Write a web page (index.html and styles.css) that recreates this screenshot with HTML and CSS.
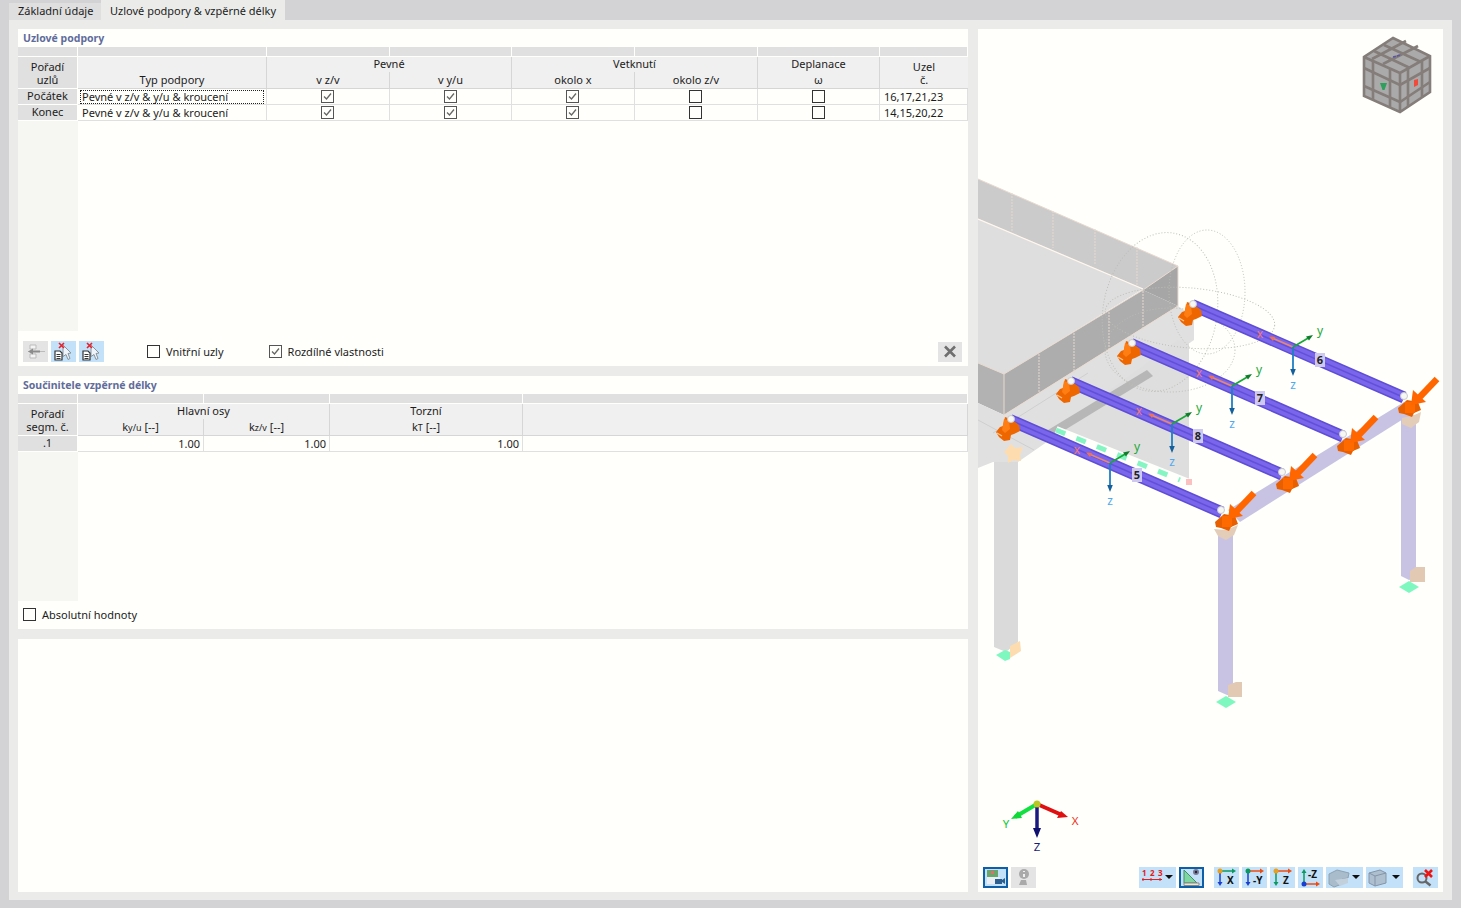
FILE: index.html
```html
<!DOCTYPE html>
<html lang="cs">
<head>
<meta charset="utf-8">
<title>Uzlové podpory &amp; vzpěrné délky</title>
<link rel="stylesheet" href="styles.css">
</head>
<body>
<nav class="tabs">
  <div class="tab">Základní údaje</div>
  <div class="tab tab-active">Uzlové podpory &amp; vzpěrné délky</div>
</nav>
<main class="main">
  <div class="left">
    <section class="panel">
      <h2 class="panel-title">Uzlové podpory</h2>
      <div class="grid g1">
        <div class="strip"></div><div class="strip"></div><div class="strip"></div><div class="strip"></div><div class="strip"></div><div class="strip"></div><div class="strip"></div><div class="strip"></div>
        <div class="hd hd-row r2">Pořadí<br>uzlů</div>
        <div class="hd r2 bottom">Typ podpory</div>
        <div class="hd c2">Pevné</div>
        <div class="hd c2">Vetknutí</div>
        <div class="hd">Deplanace</div>
        <div class="hd r2 mid">Uzel<br>č.</div>
        <div class="hd sub">v z/v</div><div class="hd sub">v y/u</div>
        <div class="hd sub">okolo x</div><div class="hd sub">okolo z/v</div>
        <div class="hd sub">ω</div>

        <div class="rh">Počátek</div>
        <div class="cell"><span class="focus">Pevné v z/v &amp; y/u &amp; kroucení</span></div>
        <div class="cell ctr"><span class="cb on"><svg viewBox="0 0 11 11"><path d="M2 5.500l2.500 2.500L9 2.500"/></svg></span></div>
        <div class="cell ctr"><span class="cb on"><svg viewBox="0 0 11 11"><path d="M2 5.500l2.500 2.500L9 2.500"/></svg></span></div>
        <div class="cell ctr"><span class="cb on"><svg viewBox="0 0 11 11"><path d="M2 5.500l2.500 2.500L9 2.500"/></svg></span></div>
        <div class="cell ctr"><span class="cb"></span></div>
        <div class="cell ctr"><span class="cb"></span></div>
        <div class="cell">16,17,21,23</div>

        <div class="rh">Konec</div>
        <div class="cell"><span class="plain">Pevné v z/v &amp; y/u &amp; kroucení</span></div>
        <div class="cell ctr"><span class="cb on"><svg viewBox="0 0 11 11"><path d="M2 5.500l2.500 2.500L9 2.500"/></svg></span></div>
        <div class="cell ctr"><span class="cb on"><svg viewBox="0 0 11 11"><path d="M2 5.500l2.500 2.500L9 2.500"/></svg></span></div>
        <div class="cell ctr"><span class="cb on"><svg viewBox="0 0 11 11"><path d="M2 5.500l2.500 2.500L9 2.500"/></svg></span></div>
        <div class="cell ctr"><span class="cb"></span></div>
        <div class="cell ctr"><span class="cb"></span></div>
        <div class="cell">14,15,20,22</div>
      </div>
      <div class="filler"><div class="filler-col"></div></div>
      <div class="foot foot1">
        <button class="tb tb-off"><svg viewBox="0 0 25 21"><path d="M7 4h6v4H7zM7 13h6v4H7z" fill="#f4f4f4" stroke="#bbb"/><path d="M5 10.500h17" stroke="#bbb"/><path d="M5 10.500l5-3v2h7v2h-7v2z" fill="#8c8c8c"/></svg></button>
        <button class="tb tb-blue"><svg viewBox="0 0 25 21"><path d="M12 4l8 8-3 .5 2 5-2 1-2-5-3 2z" fill="#eef4fa" stroke="#8b9299"/><path d="M4 10h5l2 2v7H4z" fill="#fff" stroke="#333" stroke-width="1.200"/><path d="M5.500 13.500h4M5.500 15.500h4M5.500 17.500h4" stroke="#333"/><path d="M8 2l5 5M13 2L8 7" stroke="#e8202a" stroke-width="1.600"/></svg></button>
        <button class="tb tb-blue"><svg viewBox="0 0 25 21"><path d="M12 4l8 8-3 .5 2 5-2 1-2-5-3 2z" fill="#eef4fa" stroke="#8b9299"/><path d="M4 10h5l2 2v7H4z" fill="#fff" stroke="#333" stroke-width="1.200"/><path d="M5.500 13.500h4M5.500 15.500h4M5.500 17.500h4" stroke="#333"/><path d="M8 2l5 5M13 2L8 7" stroke="#e8202a" stroke-width="1.600"/></svg></button>
        <label class="check chk-a"><span class="cb"></span>Vnitřní uzly</label>
        <label class="check chk-b"><span class="cb on"><svg viewBox="0 0 11 11"><path d="M2 5.500l2.500 2.500L9 2.500"/></svg></span>Rozdílné vlastnosti</label>
        <button class="tb tb-off tb-close"><svg viewBox="0 0 24 20"><path d="M7 4.500l10 10M17 4.500l-10 10" stroke="#6f6f6f" stroke-width="2.600"/></svg></button>
      </div>
    </section>

    <section class="panel">
      <h2 class="panel-title">Součinitele vzpěrné délky</h2>
      <div class="grid g2">
        <div class="strip"></div><div class="strip"></div><div class="strip"></div><div class="strip"></div><div class="strip"></div>
        <div class="hd hd-row r2">Pořadí<br>segm. č.</div>
        <div class="hd c2">Hlavní osy</div>
        <div class="hd">Torzní</div>
        <div class="hd r2"></div>
        <div class="hd sub">k<small>y/u</small> [--]</div>
        <div class="hd sub">k<small>z/v</small> [--]</div>
        <div class="hd sub">k<small>T</small> [--]</div>

        <div class="rh">.1</div>
        <div class="cell num">1.00</div>
        <div class="cell num">1.00</div>
        <div class="cell num">1.00</div>
        <div class="cell"></div>
      </div>
      <div class="filler"><div class="filler-col"></div></div>
      <div class="foot foot2">
        <label class="check"><span class="cb"></span>Absolutní hodnoty</label>
      </div>
    </section>

    <section class="panel"></section>
  </div>

  <section class="view">
    <svg class="scene" viewBox="978 29 465 863" xmlns="http://www.w3.org/2000/svg">
      <defs>
        <g id="sup-start">
          <path d="M-15 13l4-5 3-1 2-9 6 2 8 6 1 6-6 3-3 1-1 5-6 1-5-4z" fill="#ee6600"/>
          <path d="M-7 0l5 2 1 8-5 4-3-3z" fill="#ff7e14"/>
          <path d="M-14 14l5 3" stroke="#ffc690" stroke-width="1.200"/>
        </g>
        <g id="sup-end">
          <path d="M-6 12l9-8 11 2 3 8-7 3-2 4-8-3-5-1z" fill="#e85f00"/>
          <path d="M1 6h10v11H1z" fill="#ff6a00"/>
          <path d="M33-17L12 5" stroke="#ff6600" stroke-width="6.500"/>
          <path d="M9-6L22 6 7 9z" fill="#ff6600"/>
        </g>
        <g id="beam-end"><circle r="3.500" fill="#f6f6f2" stroke="#c9c9cf"/></g>
        <g id="axes">
          <path d="M0 0L-22-9.500" stroke="#e9866f" stroke-width="1.600"/>
          <path d="M-24-10.500l6 .5-2 4z" fill="#f07058"/>
          <path d="M0 0L17-10" stroke="#19a838" stroke-width="1.800"/>
          <path d="M20-12l-7 1.500 3 4z" fill="#0f7d2a"/>
          <path d="M0 0V24" stroke="#1f7fc4" stroke-width="1.800"/>
          <path d="M0 29l-2.800-7h5.600z" fill="#155f9a"/>
          <text class="ax" x="24" y="-12" fill="#22a838">y</text>
          <text class="ax" x="0" y="42" text-anchor="middle" fill="#4ea9f0">z</text>
          <text class="ax" x="-33" y="-9" text-anchor="middle" fill="#f47878">x</text>
        </g>
        <g id="beam">
          <path d="M0 0L212 92.500" stroke="#5f4dd4" stroke-width="12"/>
          <path d="M0 0L212 92.500" stroke="#7966ec" stroke-width="9"/>
          <path d="M0 0L212 92.500" stroke="#6350d8" stroke-width="1.500"/>
        </g>
      </defs>

      <!-- slab and wall -->
      <path d="M978 179L1178 266 1143 290 978 219z" fill="#cbcbcb"/>
      <path d="M978 219L1143 289 1004 374 978 363z" fill="#dedede"/>
      <path d="M1143 290L1178 266V306z" fill="#a6a6a6"/>
      <path d="M1004 374L1143 290 1178 306 1004 415z" fill="#adadad"/>
      <path d="M978 363L1004 374V415L978 403z" fill="#b2b2b2"/>
      <path d="M978 403L1004 415 1178 306 1194 317V340L1018 462 993 462 978 468z" fill="#e0e0e0"/>
      <path d="M1056 430L1178 340 1189 342V483z" fill="#dedede"/>
      <path d="M1048 430L1147 370 1153 376 1055 436z" fill="#b7b7b7"/>
      <path d="M978 179L1178 266 1143 290M978 219L1143 289M1143 290L1004 374 978 363M1004 374V415M1178 266V306L1004 415" fill="none" stroke="#e9d9cf"/>
      <path d="M978 219L1143 289" stroke="#fff8f0" stroke-width="1.200"/>
      <path d="M1012 193v38M1053 211v37M1095 229v36M1137 247v39M1143 291v39M1109 312v40M1074 333v40M1039 354v40" stroke="#e8d8cf" stroke-dasharray="2 1"/>
      <path d="M978 420l26 14 30 16M993 433l95-60" stroke="#cfcfcf" fill="none"/>

      <!-- columns -->
      <path d="M994 462h24V642l-12 10-12-5z" fill="#dadada"/>
      <path d="M1010 646l10-5 1 10-11 7z" fill="#fddcb0"/>
      <path d="M996 655l9-5 5 2v7l-5 2z" fill="#7ff8c0"/>
      <path d="M1218 530h15V696l-6-1-9-4z" fill="#c9c3e3"/>
      <path d="M1228 685l8-3h6v15h-14z" fill="#e2c9b4"/>
      <path d="M1216 702l10-6 10 6-10 6z" fill="#7ff8c0"/>
      <path d="M1401 415h15V578l-7 2-8-4z" fill="#c9c3e3"/>
      <path d="M1410 571l6-4h9v15h-15z" fill="#e2c9b4"/>
      <path d="M1399 587l10-6 10 6-10 6z" fill="#7ff8c0"/>
      <path d="M1228 510L1404 402 1408 416 1240 522z" fill="#c9c3e3"/>
      <path d="M1004 452l7-8 4 4 8-1-3 8 1 6-8-1-5 3 0-7z" fill="#fddcb0"/>
      <path d="M1402 418l10-2 9-4-2 10-8 6-9-4zM1214 529l12 1 12-5-4 10-8 5-8-4z" fill="#e3cdb8"/>

      <!-- dotted rings -->
      <g fill="none" stroke="#bdbdb8" stroke-dasharray="1 2">
        <ellipse cx="1160" cy="312" rx="57" ry="80" transform="rotate(10 1160 312)"/>
        <ellipse cx="1207" cy="292" rx="38" ry="62"/>
        <ellipse cx="1190" cy="318" rx="85" ry="30" transform="rotate(5 1190 318)"/>
        <ellipse cx="1170" cy="350" rx="65" ry="42"/>
      </g>

      <!-- mint dashes -->
      <path d="M1056 430L1189 483" stroke="#fffffb" stroke-width="8"/>
      <path d="M1056 430L1180 480" stroke="#86f5c4" stroke-width="5" stroke-dasharray="10 12"/>
      <rect x="1186" y="479" width="6" height="6" fill="#fcc0c0"/>

      <!-- purple members -->
      <use href="#beam" x="1192" y="305"/><use href="#beam" x="1131" y="344"/>
      <use href="#beam" x="1070" y="382"/><use href="#beam" x="1010" y="420"/>

      <use href="#sup-start" x="1193" y="304"/><use href="#sup-start" x="1132" y="343"/>
      <use href="#sup-start" x="1071" y="381"/><use href="#sup-start" x="1011" y="419"/>
      <use href="#sup-end" x="1404" y="396"/><use href="#sup-end" x="1343" y="434"/>
      <use href="#sup-end" x="1282" y="472"/><use href="#sup-end" x="1221" y="510"/>
      <use href="#beam-end" x="1193" y="304"/><use href="#beam-end" x="1132" y="343"/>
      <use href="#beam-end" x="1071" y="381"/><use href="#beam-end" x="1011" y="419"/>
      <use href="#beam-end" x="1404" y="396"/><use href="#beam-end" x="1343" y="434"/>
      <use href="#beam-end" x="1282" y="472"/><use href="#beam-end" x="1221" y="510"/>

      <use href="#axes" x="1293" y="347"/><use href="#axes" x="1232" y="386"/>
      <use href="#axes" x="1172" y="424"/><use href="#axes" x="1110" y="463"/>

      <g class="mem">
        <rect x="1315" y="353" width="10" height="14" fill="#cfc9f2"/><text x="1320" y="364">6</text>
        <rect x="1255" y="391" width="10" height="14" fill="#cfc9f2"/><text x="1260" y="402">7</text>
        <rect x="1193" y="429" width="10" height="14" fill="#cfc9f2"/><text x="1198" y="440">8</text>
        <rect x="1132" y="468" width="10" height="14" fill="#cfc9f2"/><text x="1137" y="479">5</text>
      </g>

      <!-- navigation cube -->
      <g>
        <path d="M1393 38L1430 56V92L1400 112 1364 96V57z" fill="#aaaaaa"/>
        <g fill="none" stroke="#847d7a" stroke-width="2.600">
          <path d="M1393 38L1430 56V92L1400 112 1364 96V57zM1364 57L1400 73 1430 56M1400 73V112"/>
          <path d="M1364 68L1400 85 1430 68M1364 86L1400 102 1430 82"/>
          <path d="M1373 61V100M1390 68V107M1408 68V107M1422 61V97"/>
          <path d="M1374 51L1410 68M1384 45L1421 62M1383 64L1418 46M1372 59L1406 41"/>
        </g>
        <path d="M1380 83h7l-2.500 7h-2z" fill="#2fa05c"/>
        <path d="M1414 80l4-1v6l-4 2z" fill="#ef4a3a"/>
        <path d="M1393 57l8-2" stroke="#5a55a8" stroke-width="1.500" stroke-dasharray="3 1"/>
      </g>

      <!-- global axes -->
      <path d="M1037 804L1062 815" stroke="#e01010" stroke-width="4"/>
      <path d="M1068 817l-11 1 4-7z" fill="#e01010"/>
      <path d="M1037 804L1015 817" stroke="#12e040" stroke-width="4"/>
      <path d="M1011 819l11-1-4-7z" fill="#10d838"/>
      <path d="M1037 804V830" stroke="#1a1a80" stroke-width="3.500"/>
      <path d="M1037 838l-4-10h8z" fill="#10106e"/>
      <circle cx="1037" cy="804" r="3.500" fill="#b7c824"/>
      <text class="gx" x="1075" y="825" text-anchor="middle" fill="#f03020">X</text>
      <text class="gx" x="1006" y="828" text-anchor="middle" fill="#10c838">Y</text>
      <text class="gx" x="1037" y="851" text-anchor="middle" fill="#1c1c78">Z</text>
    </svg>

    <div class="view-bar">
      <button class="tb tb-blue tb-active"><svg viewBox="0 0 25 21"><rect x="4" y="3" width="11" height="7" fill="#6aa66a"/><rect x="4" y="10" width="13" height="7" fill="#e8eef4"/><path d="M8 4h3v3H8z" fill="#e07070"/><path d="M12 12h7v5h-7z" fill="#2a5f8f"/><path d="M19 13l3-2v6l-3-2z" fill="#2a5f8f"/></svg></button>
      <button class="tb tb-off"><svg viewBox="0 0 25 21"><circle cx="13" cy="7" r="5" fill="#a9a9a9"/><path d="M10 13h5l1 5H8z" fill="#a9a9a9"/><path d="M13 4v1M13 7v3" stroke="#fff" stroke-width="1.600"/></svg></button>
      <span class="bar-space"></span>
      <button class="tb tb-blue tb-wide"><svg viewBox="0 0 37 21"><text class="nums" x="3" y="9" fill="#e02020">1</text><text class="nums" x="11" y="9" fill="#e02020">2</text><text class="nums" x="19" y="9" fill="#e02020">3</text><path d="M3 12.500h20M4 11v3M12 11v3M21 11v3" stroke="#e02020"/><path d="M26 8h8l-4 4z" fill="#111"/></svg></button>
      <button class="tb tb-blue tb-active tb-m"><svg viewBox="0 0 25 21"><path d="M5 3l13 13H5z" fill="#7fd6a0" stroke="#3d8f6a"/><path d="M5 16h15v2.500H5z" fill="#e9e9d8" stroke="#888"/><circle cx="17" cy="5" r="3" fill="#7a7a96"/><circle cx="17" cy="5" r="1.200" fill="#223"/></svg></button>
      <button class="tb tb-blue tb-g1"><svg viewBox="0 0 25 21"><path d="M6 4h13" stroke="#0a9a60" stroke-width="1.500"/><path d="M22 4l-4-2.500v5z" fill="#0a9a60"/><path d="M6 4v12" stroke="#1a3fd0" stroke-width="1.500"/><path d="M6 19l-2.500-4h5z" fill="#1a3fd0"/><circle cx="6" cy="4" r="2.500" fill="#e8a020"/><text class="ic" x="13" y="17">X</text></svg></button>
      <button class="tb tb-blue"><svg viewBox="0 0 25 21"><path d="M6 4h13" stroke="#f04a10" stroke-width="1.500"/><path d="M22 4l-4-2.500v5z" fill="#f04a10"/><path d="M6 4v12" stroke="#1a3fd0" stroke-width="1.500"/><path d="M6 19l-2.500-4h5z" fill="#1a3fd0"/><circle cx="6" cy="4" r="2.500" fill="#0a9a60"/><text class="ic" x="11" y="17">-Y</text></svg></button>
      <button class="tb tb-blue"><svg viewBox="0 0 25 21"><path d="M6 4h13" stroke="#f04a10" stroke-width="1.500"/><path d="M22 4l-4-2.500v5z" fill="#f04a10"/><path d="M6 4v12" stroke="#0a9a60" stroke-width="1.500"/><path d="M6 19l-2.500-4h5z" fill="#0a9a60"/><circle cx="6" cy="4" r="2.500" fill="#e8a020"/><text class="ic" x="13" y="17">Z</text></svg></button>
      <button class="tb tb-blue"><svg viewBox="0 0 25 21"><path d="M6 17h13" stroke="#f04a10" stroke-width="1.500"/><path d="M22 17l-4-2.500v5z" fill="#f04a10"/><path d="M6 17V5" stroke="#0a9a60" stroke-width="1.500"/><path d="M6 2l-2.500 4h5z" fill="#0a9a60"/><circle cx="6" cy="17" r="2.500" fill="#1a3fd0"/><text class="ic" x="10" y="11">-Z</text></svg></button>
      <button class="tb tb-blue tb-wide"><svg viewBox="0 0 37 21"><path d="M3 7l8-4 12 3-1 5-6 1v5l-8 3-5-3z" fill="#a9bccb" stroke="#8fa2b2"/><path d="M9 13l13-2v5l-8 3z" fill="#c2d0dc"/><path d="M26 8h8l-4 4z" fill="#111"/></svg></button>
      <button class="tb tb-blue tb-wide"><svg viewBox="0 0 37 21"><path d="M3 6l11-3 6 3v10l-11 3-6-3z" fill="#aebfd0" stroke="#8595a8"/><path d="M3 6l6 3 11-3M9 9v10" fill="none" stroke="#8595a8"/><path d="M26 8h8l-4 4z" fill="#111"/></svg></button>
      <button class="tb tb-blue tb-last"><svg viewBox="0 0 25 21"><circle cx="9" cy="11" r="4.500" fill="none" stroke="#666" stroke-width="2"/><path d="M12.500 14.500l5 4" stroke="#666" stroke-width="2.400"/><path d="M12 3l7 7M19 3l-7 7" stroke="#ee1414" stroke-width="2.600"/></svg></button>
    </div>
  </section>
</main>
</body>
</html>
```
FILE: styles.css
```css
* { box-sizing: border-box; }
html, body { margin: 0; padding: 0; }
body {
  width: 1461px;
  height: 908px;
  overflow: hidden;
  background: #d3d3d6;
  font-family: "Noto Sans", "Open Sans", sans-serif;
  font-size: 11px;
  color: #1c1c1c;
}
.tabs { display: flex; height: 20px; padding: 3px 0 0 9px; }
.tab { padding: 0 8px 0 9px; line-height: 15px; background: #dfdfe0; width: 92px; white-space: nowrap; }
.tab-active { background: #ebecea; width: 184px; margin-top: -3px; line-height: 21px; padding-left: 9px; }
.main {
  display: grid;
  grid-template-columns: 950px 465px;
  column-gap: 10px;
  width: 1443px;
  height: 880px;
  margin-left: 9px;
  padding: 9px;
  background: #ebecea;
}
.left { display: grid; grid-template-rows: 337px 253px 253px; row-gap: 10px; }
.panel { display: flex; flex-direction: column; background: #fffffb; min-height: 0; }
.panel-title {
  margin: 0;
  height: 18px;
  padding-left: 5px;
  font-size: 10.5px;
  font-weight: 700;
  line-height: 18px;
  color: #5f6c9c;
}
.grid { display: grid; grid-auto-rows: auto; }
.g1 {
  grid-template-columns: 60px 189px 123px 122px 123px 123px 122px 88px;
  grid-template-rows: 10px 15px 17px 16px 16px;
}
.g2 {
  grid-template-columns: 60px 126px 126px 193px 445px;
  grid-template-rows: 10px 15px 17px 16px;
}
.strip { background: #e0e0e0; border-right: 1px solid #fffffb; border-bottom: 1px solid #fffffb; }
.strip:last-of-type { border-right: 0; }
.hd {
  background: #f0f0f0;
  border-right: 1px solid #d6d6d6;
  text-align: center;
  line-height: 13px;
}
.c2 { grid-column: span 2; }
.r2 { grid-row: span 2; border-bottom: 1px solid #d6d6d6; }
.hd-row { background: #e0e0e0; border-right: 1px solid #fffffb; line-height: 13px; padding-top: 3px; border-bottom: 1px solid #fffffb; }
.bottom { padding-top: 16px; }
.mid { padding-top: 3px; line-height: 13px; border-right: 0; }
.sub { border-bottom: 1px solid #d6d6d6; line-height: 16px; }
.sub small { font-size: 9px; }
.rh {
  background: #e0e0e0;
  border-right: 1px solid #fffffb;
  border-bottom: 1px solid #fffffb;
  text-align: center;
  line-height: 13px;
}
.cell {
  background: #fffffb;
  border-right: 1px solid #e0e0e0;
  border-bottom: 1px solid #e0e0e0;
  padding: 0 4px;
  line-height: 16px;
  white-space: nowrap;
  min-width: 0;
}
.ctr { display: flex; align-items: center; justify-content: center; padding: 0 1px 0 0; }
.num { text-align: right; padding-right: 3px; }
.focus { display: block; margin: 1px -2px 0; padding-left: 1px; height: 14px; line-height: 11px; border: 1px dotted #222; }
.plain { display: block; line-height: 16px; }
.cb {
  display: inline-flex;
  flex: none;
  width: 13px;
  height: 13px;
  border: 1px solid #333;
  background: #fffffb;
}
.cb.on { border-color: #555; }
.cb svg { width: 11px; height: 11px; fill: none; stroke: #666; stroke-width: 1.300; }
.filler { flex: 1; min-height: 0; }
.filler-col { width: 60px; height: 100%; background: #f6f6f3; }
.foot { display: flex; align-items: center; flex: none; }
.foot1 { height: 35px; padding: 10px 6px 4px 5px; gap: 3px; }
.foot2 { height: 28px; padding: 0 0 1px 5px; }
.check { display: inline-flex; align-items: center; gap: 6px; white-space: nowrap; }
.chk-a { margin-left: 40px; }
.chk-b { margin-left: 42px; }
.tb {
  display: block;
  flex: none;
  width: 25px;
  height: 21px;
  padding: 0;
  border: 0;
  background: none;
}
.tb svg { display: block; width: 100%; height: 100%; }
.tb-off { background: #e4e4e4; }
.tb-blue { background: #c3e1f8; }
.tb-active { outline: 2px solid #0f5fa8; outline-offset: -2px; }
.tb-wide { width: 37px; }
.tb-close { width: 24px; height: 20px; margin-left: auto; }
.view { position: relative; background: #fffffb; min-height: 0; }
.scene { display: block; width: 465px; height: 863px; }
.scene text { font-family: "Noto Sans", sans-serif; }
.scene .ax { font-size: 12px; }
.scene .mem text { font-size: 11px; font-weight: 700; fill: #222; text-anchor: middle; }
.scene .gx { font-size: 11.500px; }
.view-bar {
  position: absolute;
  left: 5px;
  right: 5px;
  bottom: 4px;
  display: flex;
  gap: 3px;
}
.bar-space { flex: 1; }
.tb-m { margin-right: 7px; }
.tb-last { margin-left: 7px; }
.nums { font-family: "Noto Sans", sans-serif; font-size: 8px; font-weight: 700; }
.ic { font-family: "Noto Sans", sans-serif; font-size: 10px; font-weight: 700; fill: #111; }
```
